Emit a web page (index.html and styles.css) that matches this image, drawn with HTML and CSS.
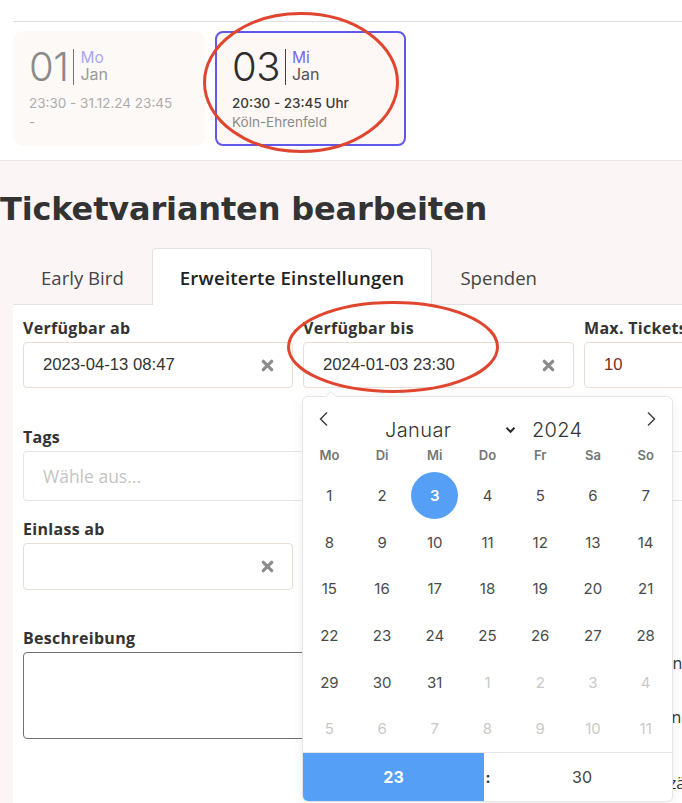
FILE: index.html
```html
<!DOCTYPE html>
<html lang="de">
<head>
<meta charset="utf-8">
<title>Ticketvarianten bearbeiten</title>
<link rel="stylesheet" href="styles.css">
</head>
<body>
<div class="top">
  <div class="rule"></div>
  <div class="cards">
    <div class="card muted">
      <div class="date"><span class="day">01</span><span class="sep"></span><span class="dm"><span class="wd">Mo</span><span class="mon">Jan</span></span></div>
      <div class="time">23:30 - 31.12.24 23:45</div>
      <div class="loc">-</div>
    </div>
    <div class="card active">
      <div class="date"><span class="day">03</span><span class="sep"></span><span class="dm"><span class="wd">Mi</span><span class="mon">Jan</span></span></div>
      <div class="time">20:30 - 23:45 Uhr</div>
      <div class="loc">Köln-Ehrenfeld</div>
    </div>
  </div>
</div>

<div class="main">
  <h1>Ticketvarianten bearbeiten</h1>
  <div class="tabs">
    <div class="tab">Early Bird</div>
    <div class="tab active">Erweiterte Einstellungen</div>
    <div class="tab">Spenden</div>
  </div>
  <div class="panel">
    <div class="form">
      <div class="field">
        <label class="lbl">Verfügbar ab</label>
        <div class="input h46"><span class="val">2023-04-13 08:47</span>
          <svg class="clear" width="13" height="13" viewBox="0 0 13 13"><path d="M2.3 2.3l8.4 8.4M10.7 2.3l-8.4 8.4" stroke="#8c8c8c" stroke-width="3.2" stroke-linecap="round"/></svg>
        </div>
      </div>
      <div class="field">
        <label class="lbl">Verfügbar bis</label>
        <div class="input h46"><span class="val">2024-01-03 23:30</span>
          <svg class="clear" width="13" height="13" viewBox="0 0 13 13"><path d="M2.3 2.3l8.4 8.4M10.7 2.3l-8.4 8.4" stroke="#8c8c8c" stroke-width="3.2" stroke-linecap="round"/></svg>
        </div>
      </div>
      <div class="field">
        <label class="lbl">Max. Tickets pro Bestellung</label>
        <div class="input h46"><span class="val num">10</span></div>
      </div>

      <div class="field tags">
        <label class="lbl">Tags</label>
        <div class="input h50 light"><span class="ph">Wähle aus...</span></div>
      </div>

      <div class="field einlass">
        <label class="lbl">Einlass ab</label>
        <div class="input h47"><span class="val"></span>
          <svg class="clear" width="13" height="13" viewBox="0 0 13 13"><path d="M2.3 2.3l8.4 8.4M10.7 2.3l-8.4 8.4" stroke="#8c8c8c" stroke-width="3.2" stroke-linecap="round"/></svg>
        </div>
      </div>

      <div class="field desc">
        <label class="lbl">Beschreibung</label>
        <div class="textarea"></div>
      </div>
      <div class="opts">
        <div class="opt o1"><span class="box"></span>Verstecken</div>
        <div class="opt o2"><span class="box"></span>Anmelden</div>
        <div class="opt o3"><span class="box"></span>Gebühr zählen</div>
      </div>
    </div>

    <div class="picker">
      <div class="cal-months">
        <svg class="nav prev" width="11" height="16" viewBox="0 0 11 16"><path d="M9 1.5L2.5 8 9 14.5" stroke="#3a3a3a" stroke-width="1.4" fill="none"/></svg>
        <div class="cur">
          <span class="mname">Januar</span>
          <svg class="mdrop" width="11" height="8" viewBox="0 0 11 8"><path d="M1.5 1.8l4 4 4-4" stroke="#2a2a2a" stroke-width="2" fill="none"/></svg>
          <span class="year">2024</span>
        </div>
        <svg class="nav next" width="11" height="16" viewBox="0 0 11 16"><path d="M2 1.5L8.5 8 2 14.5" stroke="#3a3a3a" stroke-width="1.4" fill="none"/></svg>
      </div>
      <div class="weekdays">
        <span>Mo</span><span>Di</span><span>Mi</span><span>Do</span><span>Fr</span><span>Sa</span><span>So</span>
      </div>
      <div class="days">
        <span>1</span><span>2</span><span class="sel"><i>3</i></span><span>4</span><span>5</span><span>6</span><span>7</span>
        <span>8</span><span>9</span><span>10</span><span>11</span><span>12</span><span>13</span><span>14</span>
        <span>15</span><span>16</span><span>17</span><span>18</span><span>19</span><span>20</span><span>21</span>
        <span>22</span><span>23</span><span>24</span><span>25</span><span>26</span><span>27</span><span>28</span>
        <span>29</span><span>30</span><span>31</span><span class="next">1</span><span class="next">2</span><span class="next">3</span><span class="next">4</span>
        <span class="next">5</span><span class="next">6</span><span class="next">7</span><span class="next">8</span><span class="next">9</span><span class="next">10</span><span class="next">11</span>
      </div>
      <div class="timebar">
        <div class="hour">23</div>
        <div class="colon">:</div>
        <div class="minute">30</div>
      </div>
    </div>
  </div>
</div>

<svg class="marks" width="682" height="803" viewBox="0 0 682 803">
  <ellipse cx="301" cy="82.5" rx="96.5" ry="69" fill="none" stroke="#e0462f" stroke-width="3"/>
  <ellipse cx="393" cy="347" rx="104.5" ry="44.5" fill="none" stroke="#e0462f" stroke-width="3"/>
</svg>
</body>
</html>
```

FILE: styles.css
```css
body {
  margin: 0;
  width: 682px;
  height: 803px;
  overflow: hidden;
  position: relative;
  background: #fcf5f6;
  font-family: "Open Sans", sans-serif;
  color: #333;
}

/* ---------- top date strip ---------- */
.top {
  background: #fff;
  height: 161px;
  box-sizing: border-box;
  padding-top: 21px;
  border-bottom: 1px solid #ebe6e7;
}
.rule {
  margin-left: 13px;
  border-top: 1px solid #dedede;
}
.cards {
  display: flex;
  gap: 10px;
  margin: 9px 0 0 13px;
}
.card {
  width: 192px;
  height: 115px;
  box-sizing: border-box;
  border-radius: 10px;
  background: #fdf9f6;
  padding: 16px 0 0 16px;
  font-family: Inter, sans-serif;
}
.card.active {
  width: 191px;
  border: 2px solid #6159ec;
  border-radius: 8px;
  padding: 14px 0 0 15px;
  background: #fdf8f5;
}
.date {
  display: flex;
  height: 40px;
}
.day {
  font-size: 40px;
  line-height: 40px;
  font-weight: 300;
  color: #2e2e2e;
  letter-spacing: -0.5px;
}
.sep {
  width: 1px;
  height: 36px;
  background: #444;
  margin: 2px 6px 0 5px;
}
.dm {
  display: flex;
  flex-direction: column;
  margin-top: 2px;
  line-height: 17px;
}
.wd {
  font-size: 15.5px;
  color: #7368ef;
}
.mon {
  font-size: 16px;
  color: #555;
}
.time {
  margin-top: 7px;
  font-size: 13.5px;
  line-height: 19px;
  font-weight: 500;
  color: #3a3a3a;
}
.loc {
  font-size: 13.5px;
  line-height: 19px;
  color: #8a8a8a;
}
.card.muted .day { color: #8a8a8a; }
.card.muted .sep { background: #777; }
.card.muted .wd { color: #aca5f6; }
.card.muted .mon { color: #999; }
.card.muted .time { color: #acacac; font-weight: 400; }
.card.muted .loc { color: #acacac; }

/* ---------- heading + tabs ---------- */
.main h1 {
  margin: 28px 0 19px;
  font: 700 32px/40px "DejaVu Sans", sans-serif;
  letter-spacing: -0.15px;
  color: #333;
  white-space: nowrap;
}
.tabs {
  display: flex;
  margin-left: 13px;
  height: 57px;
  margin-bottom: -1px;
  position: relative;
  z-index: 1;
}
.tab {
  padding: 0 27px;
  display: flex;
  align-items: center;
  font-size: 18.6px;
  color: #444;
  border: 1px solid transparent;
  border-bottom: none;
  border-radius: 4px 4px 0 0;
  white-space: nowrap;
}
.tab.active {
  background: #fff;
  border-color: #e2e2e2;
  font-weight: 600;
  letter-spacing: 0.2px;
  color: #222;
}

/* ---------- panel ---------- */
.panel {
  margin-left: 13px;
  width: 900px;
  height: 560px;
  background: #fff;
  border-top: 1px solid #e3e3e3;
  box-sizing: border-box;
  padding: 13px 0 0 10px;
  position: relative;
}
.form {
  display: grid;
  grid-template-columns: 270px 271px 270px;
  column-gap: 10px;
  align-items: start;
}
.lbl {
  display: block;
  font-size: 16px;
  line-height: 20px;
  font-weight: 700;
  color: #333;
  margin-bottom: 4px;
  white-space: nowrap;
  letter-spacing: 0.3px;
}
.input {
  box-sizing: border-box;
  border: 1px solid #e7ded4;
  border-radius: 4px;
  background: #fff;
  display: flex;
  align-items: center;
  padding: 0 18px 0 19px;
}
.input.light { border-color: #e6e6e6; }
.h46 { height: 46px; }
.h47 { height: 47px; }
.h50 { height: 50px; }
.val {
  flex: 1;
  font-family: "Liberation Sans", Arial, sans-serif;
  font-size: 16.7px;
  color: #333;
}
.val.num { color: #7e2b1c; }
.ph {
  font-size: 17.5px;
  color: #c4c4c4;
}
.clear { flex: none; }

.tags {
  grid-column: 1 / 4;
  margin-top: 39px;
}
.einlass {
  grid-column: 1;
  margin-top: 18px;
}
.desc {
  grid-column: 1 / 3;
  margin-top: 38px;
}
.textarea {
  height: 87px;
  box-sizing: border-box;
  border: 1px solid #707070;
  border-radius: 4px;
}
.opts {
  grid-column: 3;
  grid-row: 4;
  margin-top: 61px;
}
.opt {
  display: flex;
  align-items: center;
  font-size: 16px;
  line-height: 24px;
  color: #333;
  white-space: nowrap;
}
.opt.o2 { margin-top: 30px; }
.opt.o3 { margin-top: 42px; }
.box {
  flex: none;
  width: 16px;
  height: 16px;
  border: 1px solid #999;
  border-radius: 3px;
  box-sizing: border-box;
}
.o2 .box { margin-right: 5px; }
.o3 .box { margin-right: 8px; }

/* ---------- date picker ---------- */
.picker {
  position: absolute;
  left: 290px;
  top: 92px;
  width: 369px;
  height: 404px;
  background: #fff;
  border-radius: 5px;
  box-shadow: 1px 0 0 #e6e6e6, -1px 0 0 #e6e6e6, 0 1px 0 #e6e6e6, 0 -1px 0 #e6e6e6, 0 3px 13px rgba(0,0,0,0.08);
  font-family: Inter, sans-serif;
  z-index: 5;
}
.picker::before {
  content: "";
  position: absolute;
  left: 22px;
  top: -6px;
  border: 6px solid transparent;
  border-top: 0;
  border-bottom-color: #e6e6e6;
}
.picker::after {
  content: "";
  position: absolute;
  left: 23px;
  top: -5px;
  border: 5px solid transparent;
  border-top: 0;
  border-bottom-color: #fff;
}
.cal-months {
  position: relative;
  height: 43px;
}
.nav {
  position: absolute;
  top: 14px;
}
.nav.prev { left: 15px; }
.nav.next { left: 343px; }
.cur {
  display: flex;
  align-items: center;
  padding: 21px 0 0 82px;
  height: 24px;
}
.mname {
  width: 120px;
  font-size: 20px;
  line-height: 24px;
  font-weight: 300;
  color: #333;
  letter-spacing: 0.4px;
}
.mdrop {
  margin: 0 16px 0 0;
}
.year {
  font-size: 20px;
  line-height: 24px;
  font-weight: 300;
  color: #333;
  letter-spacing: 0.3px;
}
.weekdays {
  display: grid;
  grid-template-columns: repeat(7, 1fr);
  height: 29px;
  align-items: center;
}
.weekdays span {
  text-align: center;
  font-size: 13px;
  font-weight: 600;
  color: #757575;
}
.days {
  margin-top: 3px;
  display: grid;
  grid-template-columns: repeat(7, 1fr);
  grid-auto-rows: 46.7px;
}
.days span {
  display: flex;
  align-items: center;
  justify-content: center;
  font-size: 15px;
  color: #4a4a4a;
}
.days span.next { color: #c9c9c9; }
.days span.sel i {
  font-style: normal;
  width: 47px;
  height: 47px;
  border-radius: 50%;
  background: #569ff7;
  color: #fff;
  font-weight: 600;
  display: flex;
  align-items: center;
  justify-content: center;
}
.timebar {
  display: flex;
  height: 48px;
  border-top: 1px solid #e6e6e6;
  overflow: hidden;
  border-radius: 0 0 5px 5px;
}
.hour {
  width: 181px;
  background: #569ff7;
  color: #fff;
  font-weight: 700;
  font-size: 16px;
  display: flex;
  align-items: center;
  justify-content: center;
}
.colon {
  width: 8px;
  display: flex;
  align-items: center;
  justify-content: center;
  font-weight: 700;
  font-size: 15px;
  color: #333;
}
.minute {
  flex: 1;
  display: flex;
  align-items: center;
  justify-content: center;
  font-size: 16px;
  color: #444;
}

/* ---------- annotation marks ---------- */
.marks {
  position: absolute;
  left: 0;
  top: 0;
  pointer-events: none;
  z-index: 20;
}
```
